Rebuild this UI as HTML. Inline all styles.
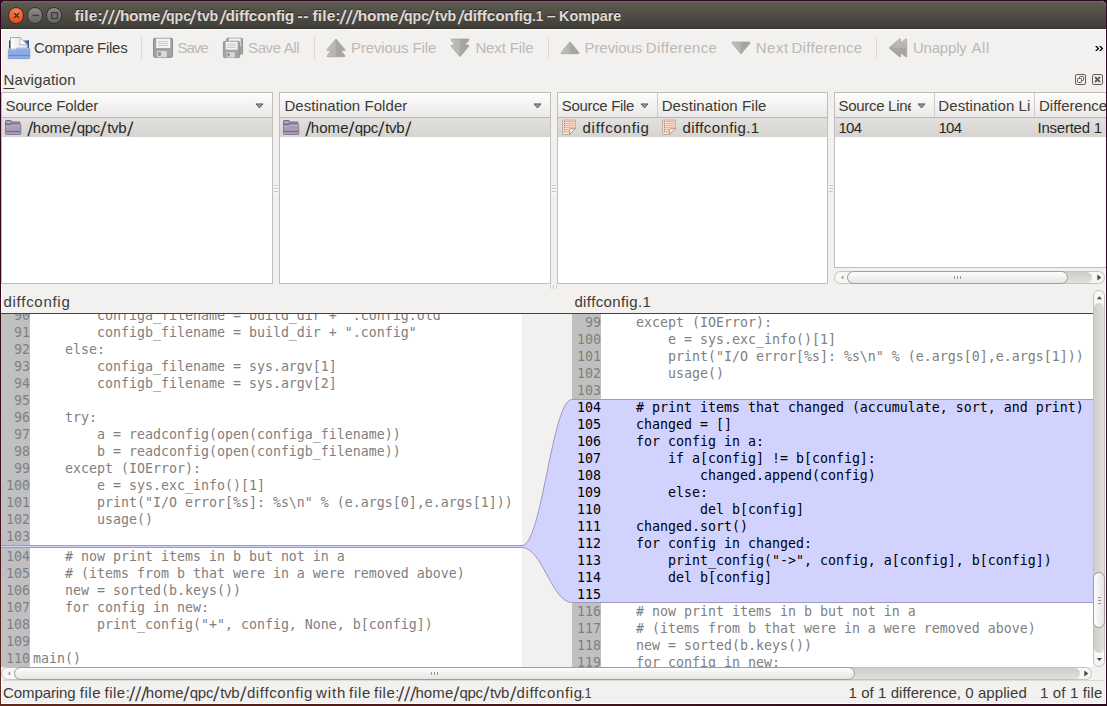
<!DOCTYPE html>
<html><head><meta charset="utf-8"><title>Kompare</title>
<style>
*{box-sizing:border-box;margin:0;padding:0}
html,body{width:1107px;height:706px;overflow:hidden;background:#2e0a20}
body{position:relative;font-family:"Liberation Sans","DejaVu Sans",sans-serif;font-size:15px;color:#3c3b37}
div,span,svg{position:absolute}
#win{left:1px;top:1px;width:1105px;height:703px;background:#f2f1f0;border:1px solid #fff;border-top:none;border-radius:5px 5px 0 0}
#title{left:1px;top:1px;width:1105px;height:28px;background:linear-gradient(#67665c 0,#67665c 1px,#5b5950 2px,#403e39 27px);border-bottom:1px solid #32312c;border-radius:5px 5px 0 0}
#title .t{left:73px;top:5.5px;font-weight:bold;font-size:15.5px;line-height:18px;color:#dfdbd2;white-space:nowrap;text-shadow:0 -1px 0 rgba(0,0,0,.55)}
.wb{top:6px;width:16.500px;height:16.500px;border-radius:50%}
.tx{white-space:nowrap;font-size:15px;line-height:18px;height:18px}
.dis{color:#bcb9b4}
u{text-decoration-thickness:1px;text-underline-offset:2.500px}
.sep{top:37px;width:1px;height:22px;background:#dad7d3}
/* nav panels */
.panel{background:#fff;border:1px solid #c1beb9}
.hdr{left:0;top:0;height:25px;background:linear-gradient(#fdfdfd,#ebe9e7);border-bottom:1px solid #bab7b1}
.row{color:#2a2926;left:0;top:25px;height:19px;background:linear-gradient(#e3e1df,#d6d4d1)}
.arr{width:0;height:0;border-left:4px solid transparent;border-right:4px solid transparent;border-top:5px solid #77746e}
/* code */
.code{font-family:"DejaVu Sans Mono","Liberation Mono",monospace;font-size:13.29px;line-height:17px;white-space:pre;color:#808080}
.pane{background:#fff;overflow:hidden}
.gut{background:#c0c0c0;left:0;top:0;width:29px}
.ln{left:0;width:29px;text-align:right;height:17px}
.cl{left:32px;height:17px}
.blk{color:#000}
</style></head><body>
<div style="left:0;top:0;width:1px;height:706px;background:linear-gradient(#2c001e,#3a0c1c 60%,#5e2a1e)"></div><div style="left:0;top:704px;width:1107px;height:2px;background:linear-gradient(90deg,#5e2a1e,#4a1818 40%,#35101e 70%,#2c0a1e)"></div>
<div id="win"></div>
<div id="title">
<div class="wb" style="left:6.900px;background:radial-gradient(circle at 50% 25%,#f4895f,#ea5822 65%,#dd4814);border:1px solid #4a2a1c"></div>
<div class="wb" style="left:25.900px;background:linear-gradient(#8d8c86,#64635d);border:1px solid #33322e"></div>
<div class="wb" style="left:44.900px;background:linear-gradient(#8d8c86,#64635d);border:1px solid #33322e"></div>
<svg style="left:-.4px;top:-.3px" width="70" height="28" viewBox="0 0 70 28"><path d="M13 12l5 5m0-5l-5 5" stroke="#3c2a20" stroke-width="1.300" fill="none"/><path d="M31.500 14.500h6.500" stroke="#3c3b37" stroke-width="1.400"/><rect x="50.500" y="11.500" width="6" height="6" fill="#6e6d67" stroke="#3c3b37" stroke-width="1.200"/></svg>
<span class="t" style="left:73.5px;top:5.5px;letter-spacing:0.16px">file:</span><span class="t" style="left:100.8px;top:5.5px;letter-spacing:-0.37px;transform:skewX(-2.8deg) scale(1.55,1.28);transform-origin:0 3.7px;font-weight:normal">///</span><span class="t" style="left:118.9px;top:5.5px;letter-spacing:-0.28px">home</span><span class="t" style="left:159.7px;top:5.5px;transform:skewX(-3.6deg) scale(1.55,1.28);transform-origin:0 3.7px;font-weight:normal">/</span><span class="t" style="left:164.6px;top:5.5px;transform:scaleX(0.907);transform-origin:0 0">qpc</span><span class="t" style="left:189.4px;top:5.5px;transform:skewX(-2.8deg) scale(1.55,1.28);transform-origin:0 3.7px;font-weight:normal">/</span><span class="t" style="left:196.1px;top:5.5px;transform:scaleX(0.916);transform-origin:0 0">tvb</span><span class="t" style="left:219.0px;top:5.5px;transform:skewX(-2.4deg) scale(1.55,1.28);transform-origin:0 3.7px;font-weight:normal">/</span><span class="t" style="left:224.6px;top:5.5px;letter-spacing:-0.21px">diffconfig </span><span class="t" style="left:296.5px;top:5.5px;letter-spacing:0.55px">-- </span><span class="t" style="left:311.4px;top:5.5px;letter-spacing:0.16px">file:</span><span class="t" style="left:338.7px;top:5.5px;letter-spacing:-0.37px;transform:skewX(-2.8deg) scale(1.55,1.28);transform-origin:0 3.7px;font-weight:normal">///</span><span class="t" style="left:356.8px;top:5.5px;letter-spacing:-0.28px">home</span><span class="t" style="left:397.6px;top:5.5px;transform:skewX(-3.6deg) scale(1.55,1.28);transform-origin:0 3.7px;font-weight:normal">/</span><span class="t" style="left:402.5px;top:5.5px;transform:scaleX(0.907);transform-origin:0 0">qpc</span><span class="t" style="left:427.3px;top:5.5px;transform:skewX(-2.8deg) scale(1.55,1.28);transform-origin:0 3.7px;font-weight:normal">/</span><span class="t" style="left:434.0px;top:5.5px;transform:scaleX(0.916);transform-origin:0 0">tvb</span><span class="t" style="left:456.9px;top:5.5px;transform:skewX(-2.4deg) scale(1.55,1.28);transform-origin:0 3.7px;font-weight:normal">/</span><span class="t" style="left:462.5px;top:5.5px;letter-spacing:-0.21px">diffconfig</span><span class="t" style="left:530.8px;top:5.5px;transform:scaleX(0.861);transform-origin:0 0">.1 </span><span class="t" style="left:546.1px;top:5.5px">– </span><span class="t" style="left:558.3px;top:5.5px;transform:scaleX(0.928);transform-origin:0 0">Kompare</span>
</div>
<div style="left:1px;top:29px;width:1105px;height:1px;background:#fdfdfc"></div>

<!-- TOOLBAR -->
<div id="tb" style="left:0;top:0;width:1107px;height:70px">
<span class="tx" style="left:34.0px;top:38.5px;letter-spacing:-0.31px">Compare </span><span class="tx" style="left:97.0px;top:38.5px;letter-spacing:-0.25px">Files</span>
<div class="sep" style="left:141px"></div>
<div class="tx dis" style="left:177.4px;top:38.5px;letter-spacing:-1px">Save</div>
<div class="tx dis" style="left:248px;top:38.5px;letter-spacing:-.37px">Save All</div>
<div class="sep" style="left:314px"></div>
<div class="tx dis" style="left:351px;top:38.5px;letter-spacing:-.117px">Previous File</div>
<div class="tx dis" style="left:475.4px;top:38.5px;letter-spacing:-.12px">Next File</div>
<div class="sep" style="left:548px"></div>
<span class="tx dis" style="left:584.5px;top:38.5px;letter-spacing:-0.07px">Previous </span><span class="tx dis" style="left:645.8px;top:38.5px;letter-spacing:0.34px">Difference</span>
<span class="tx dis" style="left:755.8px;top:38.5px;letter-spacing:0.47px">Next </span><span class="tx dis" style="left:791.5px;top:38.5px;letter-spacing:0.29px">Difference</span>
<div class="sep" style="left:876px"></div>
<span class="tx dis" style="left:912.9px;top:38.5px;letter-spacing:-0.18px">Unapply </span><span class="tx dis" style="left:971.5px;top:38.5px;letter-spacing:0.52px">All</span>
<svg style="left:1090px;top:42px" width="15" height="13" viewBox="1090 42 15 13"><path id="chv" d="M1095 46h1.800l2.500 2.550l-2.500 2.550h-1.800l2.500-2.550z" fill="#000"/><use href="#chv" x="4"/></svg>
</div>


<!-- ICONS -->
<svg id="icons" style="left:0;top:30px" width="1107" height="36" viewBox="0 30 1107 36">
<defs>
<linearGradient id="gA" x1="0" x2="1" y1="0" y2="0"><stop offset="0" stop-color="#c4c2bf"/><stop offset=".5" stop-color="#b4b2af"/><stop offset=".5" stop-color="#a9a7a4"/><stop offset="1" stop-color="#a3a19e"/></linearGradient>
<linearGradient id="gB" x1="0" x2="0" y1="0" y2="1"><stop offset="0" stop-color="#c4c2bf"/><stop offset=".5" stop-color="#b4b2af"/><stop offset=".5" stop-color="#a9a7a4"/><stop offset="1" stop-color="#a3a19e"/></linearGradient>
<linearGradient id="gP" x1="0" x2="1" y1="0" y2="0"><stop offset="0" stop-color="#fdfdfd"/><stop offset="1" stop-color="#dcdcdc"/></linearGradient>
<g id="flop"><rect x=".5" y=".5" width="19" height="19" rx="1" fill="#a3a3a3" stroke="#8e8e8e"/><path d="M.5 18.500v1h1z" fill="#f2f1f0"/><rect x="3.200" y=".8" width="14" height="9.400" fill="#f3f3f3"/><path d="M5 3.700h10M5 5.700h10M5 7.700h10" stroke="#c4c4c4" stroke-width=".9"/><rect x="4.200" y="13.200" width="9.600" height="6.300" fill="#d9d9d9"/><rect x="5.300" y="14.300" width="2.500" height="3.700" fill="#8c8c8c"/></g>
</defs>
<!-- compare files -->
<path d="M9 40.500h2v8h-2zM27 40.500h2v8h-2z" fill="#223f8e"/>
<path d="M22 40.500h6.500v8h-6.500z" fill="#3d64b8"/>
<path d="M10.500 37.500h9.500l7.500 7.500v5h-17z" fill="url(#gP)" stroke="#9a9a9a" stroke-width=".8"/>
<path d="M20 37.500q.8 4.500 -.5 7.200q3.500 -.8 8 .3z" fill="#fff" stroke="#a8a8a8" stroke-width=".7"/>
<path d="M8.300 49.200h7.500l1-1h12.400q.6 0 .6.600v9.200q0 .7-.7.700h-20.200q-.7 0-.7-.7z" fill="#8daae3" stroke="#6b8cd2" stroke-width=".6"/>
<path d="M8.500 55.500h21" stroke="#6787cf" stroke-width="1.100"/>
<path d="M8.600 49.700h7.200l1-1h12.300" stroke="#b5cbf2" stroke-width=".8" fill="none"/>
<!-- save -->
<use href="#flop" x="153" y="37.800"/>
<!-- save all -->
<g transform="translate(226.200 37.800) scale(.84)"><use href="#flop"/></g>
<g transform="translate(223 41) scale(.85)"><use href="#flop"/></g>
<!-- prev file -->
<path id="pf" d="M336 39l8.800 10.400q.6 1.200-.8 1.200h-3.200l4 4.900q.6 1.200-.8 1.200h-16q-1.400 0-.8-1.200l4-4.900h-3.200q-1.400 0-.8-1.200z" fill="url(#gA)" stroke="#a09e9b" stroke-width=".7"/>
<!-- next file -->
<g transform="translate(124 95.700) scale(1 -1)"><use href="#pf"/></g>
<!-- prev diff -->
<path id="pd" d="M570 41.800l8.800 10.600q.6 1.300-.8 1.300h-16q-1.400 0-.8-1.300z" fill="url(#gA)" stroke="#a09e9b" stroke-width=".7"/>
<g transform="translate(171 95.700) scale(1 -1)"><use href="#pd"/></g>
<!-- unapply all -->
<path d="M889 47.900l10.400-8.800q1.200-.6 1.200.8v3.200l4.900-4q1.200-.6 1.200.8v16q0 1.400-1.200.8l-4.900-4v3.200q0 1.400-1.200.8z" fill="url(#gB)" stroke="#a09e9b" stroke-width=".7"/>
</svg>

<!-- NAVIGATION -->
<div class="tx" style="left:3.5px;top:71px;letter-spacing:.122px"><u>N</u>avigation</div>

<div class="panel" style="left:1px;top:92px;width:272px;height:192px">
 <div class="hdr" style="width:270px"><div class="tx" style="left:3.500px;top:3.5px;letter-spacing:-.125px">Source Folder</div><svg style="left:253px;top:9.500px" width="9" height="7" viewBox="0 0 9 7"><path d="M1 .900h7l-3.500 4.100z" fill="#9c9a96" stroke="#55534e" stroke-width=".9" stroke-linejoin="round"/></svg></div>
 <div class="row" style="width:270px"><span class="tx" style="left:25.7px;top:0.8px;transform:skewX(-3.5deg) scale(1.25,1.33);transform-origin:0 5.15px">/</span><span class="tx" style="left:30.7px;top:0.8px;letter-spacing:0.12px">home</span><span class="tx" style="left:69.2px;top:0.8px;transform:skewX(-3.5deg) scale(1.25,1.33);transform-origin:0 5.15px">/</span><span class="tx" style="left:74.7px;top:0.8px;letter-spacing:-0.30px">qpc</span><span class="tx" style="left:99.1px;top:0.8px;transform:skewX(-4.7deg) scale(1.25,1.33);transform-origin:0 5.15px">/</span><span class="tx" style="left:105.2px;top:0.8px;letter-spacing:-0.28px">tvb</span><span class="tx" style="left:126.2px;top:0.8px;transform:skewX(-4.7deg) scale(1.25,1.33);transform-origin:0 5.15px">/</span></div>
</div>
<div class="panel" style="left:279px;top:92px;width:272px;height:192px">
 <div class="hdr" style="width:270px"><div class="tx" style="left:4.4px;top:3.5px;letter-spacing:.07px">Destination Folder</div><svg style="left:253px;top:9.500px" width="9" height="7" viewBox="0 0 9 7"><path d="M1 .900h7l-3.500 4.100z" fill="#9c9a96" stroke="#55534e" stroke-width=".9" stroke-linejoin="round"/></svg></div>
 <div class="row" style="width:270px"><span class="tx" style="left:25.7px;top:0.8px;transform:skewX(-3.5deg) scale(1.25,1.33);transform-origin:0 5.15px">/</span><span class="tx" style="left:30.7px;top:0.8px;letter-spacing:0.12px">home</span><span class="tx" style="left:69.2px;top:0.8px;transform:skewX(-3.5deg) scale(1.25,1.33);transform-origin:0 5.15px">/</span><span class="tx" style="left:74.7px;top:0.8px;letter-spacing:-0.30px">qpc</span><span class="tx" style="left:99.1px;top:0.8px;transform:skewX(-4.7deg) scale(1.25,1.33);transform-origin:0 5.15px">/</span><span class="tx" style="left:105.2px;top:0.8px;letter-spacing:-0.28px">tvb</span><span class="tx" style="left:126.2px;top:0.8px;transform:skewX(-4.7deg) scale(1.25,1.33);transform-origin:0 5.15px">/</span></div>
</div>
<div class="panel" style="left:557px;top:92px;width:271px;height:192px">
 <div class="hdr" style="width:269px"><div class="tx" style="left:3.8px;top:3.5px;letter-spacing:-.33px">Source File</div><svg style="left:82px;top:9.500px" width="9" height="7" viewBox="0 0 9 7"><path d="M1 .900h7l-3.500 4.100z" fill="#9c9a96" stroke="#55534e" stroke-width=".9" stroke-linejoin="round"/></svg>
 <div style="left:99px;top:0;width:1px;height:24px;background:#cfccc8"></div><div class="tx" style="left:103.7px;top:3.5px;letter-spacing:.093px">Destination File</div></div>
 <div class="row" style="width:269px"><div class="tx" style="left:24.5px;top:.8px;letter-spacing:.744px">diffconfig</div><div class="tx" style="left:124.6px;top:.8px;letter-spacing:.382px">diffconfig.1</div></div>
</div>
<div class="panel" style="left:834px;top:92px;width:272px;height:176px;border-right:none;overflow:hidden">
 <div class="hdr" style="width:271px"><div class="tx" style="left:3.5px;top:3.5px;width:72.5px;overflow:hidden;letter-spacing:-.3px">Source Line</div><svg style="left:82px;top:9.500px" width="9" height="7" viewBox="0 0 9 7"><path d="M1 .900h7l-3.500 4.100z" fill="#9c9a96" stroke="#55534e" stroke-width=".9" stroke-linejoin="round"/></svg>
 <div style="left:99px;top:0;width:1px;height:24px;background:#cfccc8"></div><div class="tx" style="left:103.3px;top:3.5px;width:92px;overflow:hidden;letter-spacing:.092px">Destination Line</div>
 <div style="left:199px;top:0;width:1px;height:24px;background:#cfccc8"></div><div class="tx" style="left:204px;top:3.5px">Difference</div></div>
 <div class="row" style="width:271px"><div class="tx" style="left:3.4px;top:.8px;letter-spacing:-.7px">104</div><div class="tx" style="left:103.4px;top:.8px;letter-spacing:-.7px">104</div><div class="tx" style="left:202.6px;top:.8px;letter-spacing:-.256px">Inserted 1 line</div></div>
</div>


<!-- ROW ICONS -->
<svg style="left:0;top:117px" width="700" height="20" viewBox="0 117 700 20">
<defs>
<g id="fold"><path d="M.5 1.300q0-.8.800-.8h4.400q.8 0 .8.800v.7h7.700q.8 0 .8.800v2.200h-14.500z" fill="#9d93ac" stroke="#6a6788" stroke-width=".9"/><path d="M1.500 2.500h4" stroke="#c9c0d6" stroke-width=".9"/><path d="M1.300 3.900h13" stroke="#6f6c8c" stroke-width="1"/><path d="M.5 5.500h5.500l1-1h8q.8 0 .8.800v8.400q0 .8-.8.800h-13.700q-.8 0-.8-.8z" fill="#a89db3" stroke="#77718f" stroke-width=".8"/><path d="M.8 11.500h14.700" stroke="#6d6a8b" stroke-width="1.100"/><path d="M1 6h5l1-1h8" stroke="#d5cbdc" stroke-width=".7" fill="none"/></g>
<g id="doc"><path d="M.5.500h13v8.500l-6 6h-7z" fill="#fcdac6" stroke="#b3a4a8" stroke-width=".8"/><path d="M13.500 9h-4.500q-1.500 0-1.500 1.500v4.500z" fill="#fde6da" stroke="#a98080" stroke-width=".7"/><path d="M4 2h8.500M4 4h8.500M4 6h8.500M4 8h8.500M4 10h3.500M4 12h3" stroke="#dcb8a8" stroke-width="1"/><path d="M2 2h1.200M2 4h1.200M2 6h1.200M2 8h1.200M2 10h1.200M2 12h1.200" stroke="#927488" stroke-width="1"/></g>
</defs>
<use href="#fold" x="5" y="120"/>
<use href="#fold" x="283" y="120"/>
<use href="#doc" x="562" y="119.500"/>
<use href="#doc" x="662" y="119.500"/>
</svg>


<!-- SPLITTER HANDLES -->
<style>.hh{width:4px;height:1px;background:#cbc8c4;box-shadow:0 1px 0 #fbfbfa}.hv{width:1px;height:4px;background:#cbc8c4;box-shadow:1px 0 0 #fbfbfa}</style>
<div class="hh" style="left:274px;top:185px"></div><div class="hh" style="left:274px;top:188px"></div><div class="hh" style="left:274px;top:191px"></div>
<div class="hh" style="left:552px;top:185px"></div><div class="hh" style="left:552px;top:188px"></div><div class="hh" style="left:552px;top:191px"></div>
<div class="hh" style="left:829px;top:185px"></div><div class="hh" style="left:829px;top:188px"></div><div class="hh" style="left:829px;top:191px"></div>
<div class="hv" style="left:550px;top:285px"></div><div class="hv" style="left:553px;top:285px"></div><div class="hv" style="left:556px;top:285px"></div>

<!-- DIFF VIEW -->
<div class="tx" style="left:3.5px;top:293px;letter-spacing:.722px">diffconfig</div>
<div class="tx" style="left:574.4px;top:293px;letter-spacing:.391px">diffconfig.1</div>
<div style="left:1px;top:313px;width:1092px;height:1px;background:#45443f"></div>

<div id="lp" class="pane code" style="left:1px;top:314px;width:521px;height:353px">
<div class="gut" style="height:353px"></div>
<div class="ln" style="top:-7px">90</div><div class="cl" style="top:-7px">        configa_filename = build_dir + ".config.old"</div>
<div class="ln" style="top:10px">91</div><div class="cl" style="top:10px">        configb_filename = build_dir + ".config"</div>
<div class="ln" style="top:27px">92</div><div class="cl" style="top:27px">    else:</div>
<div class="ln" style="top:44px">93</div><div class="cl" style="top:44px">        configa_filename = sys.argv[1]</div>
<div class="ln" style="top:61px">94</div><div class="cl" style="top:61px">        configb_filename = sys.argv[2]</div>
<div class="ln" style="top:78px">95</div>
<div class="ln" style="top:95px">96</div><div class="cl" style="top:95px">    try:</div>
<div class="ln" style="top:112px">97</div><div class="cl" style="top:112px">        a = readconfig(open(configa_filename))</div>
<div class="ln" style="top:129px">98</div><div class="cl" style="top:129px">        b = readconfig(open(configb_filename))</div>
<div class="ln" style="top:146px">99</div><div class="cl" style="top:146px">    except (IOError):</div>
<div class="ln" style="top:163px">100</div><div class="cl" style="top:163px">        e = sys.exc_info()[1]</div>
<div class="ln" style="top:180px">101</div><div class="cl" style="top:180px">        print("I/O error[%s]: %s\n" % (e.args[0],e.args[1]))</div>
<div class="ln" style="top:197px">102</div><div class="cl" style="top:197px">        usage()</div>
<div class="ln" style="top:214px">103</div>
<div style="left:0;top:231px;width:521px;height:3px;background:#d2d2ff;border-top:1px solid #9b9bbd;border-bottom:1px solid #9b9bbd"></div>
<div class="ln" style="top:234px">104</div><div class="cl" style="top:234px">    # now print items in b but not in a</div>
<div class="ln" style="top:251px">105</div><div class="cl" style="top:251px">    # (items from b that were in a were removed above)</div>
<div class="ln" style="top:268px">106</div><div class="cl" style="top:268px">    new = sorted(b.keys())</div>
<div class="ln" style="top:285px">107</div><div class="cl" style="top:285px">    for config in new:</div>
<div class="ln" style="top:302px">108</div><div class="cl" style="top:302px">        print_config("+", config, None, b[config])</div>
<div class="ln" style="top:319px">109</div>
<div class="ln" style="top:336px">110</div><div class="cl" style="top:336px">main()</div>
</div>
<div id="rp" class="pane code" style="left:572px;top:314px;width:521px;height:353px">
<div class="gut" style="height:353px"></div>
<div style="left:0;top:85px;width:521px;height:204px;background:#d2d2ff;border-top:1px solid #9b9bbd;border-bottom:1px solid #9b9bbd"></div>
<div class="ln" style="top:0px">99</div><div class="cl" style="top:0px">    except (IOError):</div>
<div class="ln" style="top:17px">100</div><div class="cl" style="top:17px">        e = sys.exc_info()[1]</div>
<div class="ln" style="top:34px">101</div><div class="cl" style="top:34px">        print("I/O error[%s]: %s\n" % (e.args[0],e.args[1]))</div>
<div class="ln" style="top:51px">102</div><div class="cl" style="top:51px">        usage()</div>
<div class="ln" style="top:68px">103</div>
<div class="ln blk" style="top:85px">104</div><div class="cl blk" style="top:85px">    # print items that changed (accumulate, sort, and print)</div>
<div class="ln blk" style="top:102px">105</div><div class="cl blk" style="top:102px">    changed = []</div>
<div class="ln blk" style="top:119px">106</div><div class="cl blk" style="top:119px">    for config in a:</div>
<div class="ln blk" style="top:136px">107</div><div class="cl blk" style="top:136px">        if a[config] != b[config]:</div>
<div class="ln blk" style="top:153px">108</div><div class="cl blk" style="top:153px">            changed.append(config)</div>
<div class="ln blk" style="top:170px">109</div><div class="cl blk" style="top:170px">        else:</div>
<div class="ln blk" style="top:187px">110</div><div class="cl blk" style="top:187px">            del b[config]</div>
<div class="ln blk" style="top:204px">111</div><div class="cl blk" style="top:204px">    changed.sort()</div>
<div class="ln blk" style="top:221px">112</div><div class="cl blk" style="top:221px">    for config in changed:</div>
<div class="ln blk" style="top:238px">113</div><div class="cl blk" style="top:238px">        print_config("-&gt;", config, a[config], b[config])</div>
<div class="ln blk" style="top:255px">114</div><div class="cl blk" style="top:255px">        del b[config]</div>
<div class="ln blk" style="top:272px">115</div>
<div class="ln" style="top:289px">116</div><div class="cl" style="top:289px">    # now print items in b but not in a</div>
<div class="ln" style="top:306px">117</div><div class="cl" style="top:306px">    # (items from b that were in a were removed above)</div>
<div class="ln" style="top:323px">118</div><div class="cl" style="top:323px">    new = sorted(b.keys())</div>
<div class="ln" style="top:340px">119</div><div class="cl" style="top:340px">    for config in new:</div>
</div>


<!-- DOCK BUTTONS -->
<svg style="left:1070px;top:70px" width="36" height="20" viewBox="1070 70 36 20"><g fill="none" stroke="#625f59" stroke-width="1"><rect x="1075.500" y="74.500" width="10" height="10" rx="1.5"/><rect x="1092.500" y="74.500" width="10" height="10" rx="1.5"/><rect x="1079.500" y="76.500" width="4" height="4" rx=".8"/><rect x="1077.500" y="78.500" width="4" height="4" rx=".8" fill="#f2f1f0"/><path d="M1095 77l5 5m0-5l-5 5" stroke-width="1.800"/></g></svg>

<!-- SCROLLBARS -->
<style>
.sbo{border:1px solid #c5c2bd;background:#f8f7f6;border-radius:7px}
.trh{background:linear-gradient(#cfcdc9,#e2e0dd);border-radius:6px}
.trv{background:linear-gradient(90deg,#cfcdc9,#e2e0dd);border-radius:6px}
.thh{border:1px solid #a19e98;background:linear-gradient(#fdfdfd,#e6e5e3);border-radius:7px}
.thv{border:1px solid #a19e98;background:linear-gradient(90deg,#fdfdfd,#e6e5e3);border-radius:7px}
.gv{width:1px;height:3px;background:#9a9792}
.gh{width:3px;height:1px;background:#9a9792}
.al{width:0;height:0;border-top:2.500px solid transparent;border-bottom:2.500px solid transparent;border-right:3px solid #a8a5a0}
.ar{width:0;height:0;border-top:3px solid transparent;border-bottom:3px solid transparent;border-left:4px solid #4a4945}
.au{width:0;height:0;border-left:2.500px solid transparent;border-right:2.500px solid transparent;border-bottom:2.500px solid #4a4945}
.ad{width:0;height:0;border-left:2.500px solid transparent;border-right:2.500px solid transparent;border-top:2.500px solid #4a4945}
</style>
<!-- nav h-scroll -->
<div class="sbo" style="left:834px;top:271px;width:271px;height:13px"></div>
<div class="trh" style="left:847px;top:272px;width:245px;height:11px"></div>
<div class="thh" style="left:847px;top:271px;width:221px;height:13px"></div>
<div class="gv" style="left:954px;top:276px"></div><div class="gv" style="left:957px;top:276px"></div><div class="gv" style="left:960px;top:276px"></div>
<!-- main h-scroll -->
<div class="sbo" style="left:1px;top:667px;width:1091px;height:13px"></div>
<div class="trh" style="left:14px;top:668px;width:1066px;height:11px"></div>
<div class="thh" style="left:14px;top:667px;width:841px;height:13px"></div>
<div class="gv" style="left:431px;top:672px"></div><div class="gv" style="left:434px;top:672px"></div><div class="gv" style="left:437px;top:672px"></div>
<!-- main v-scroll -->
<div class="sbo" style="left:1093px;top:290px;width:12px;height:377px"></div>
<div class="trv" style="left:1094px;top:303px;width:10px;height:350px"></div>
<div class="thv" style="left:1093px;top:572px;width:12px;height:56px"></div>
<div class="gh" style="left:1097.500px;top:596.500px"></div><div class="gh" style="left:1097.500px;top:599.500px"></div><div class="gh" style="left:1097.500px;top:602.500px"></div>


<!-- CONNECTOR -->
<svg style="left:522px;top:314px" width="50" height="353" viewBox="522 314 50 353">
<path d="M522 545.500C542 545.500 552 399.500 572 399.500L572 602.500C552 602.500 542 547.500 522 547.500Z" fill="#d2d2ff"/>
<path d="M522 545.500C542 545.500 552 399.500 572 399.500M522 547.500C542 547.500 552 602.500 572 602.500" fill="none" stroke="#9b9bbd" stroke-width="1"/>
</svg>

<svg style="left:0;top:270px" width="1107" height="412" viewBox="0 270 1107 412">
<path d="M1096.800 299.300l2.600-3l2.600 3zM1096.800 658.100l2.600 3l2.600-3z" fill="#4c4a46"/>
<path d="M1097.300 274.500l4 3l-4 3zM1084.300 670.500l4 3l-4 3z" fill="#4c4a46"/>
<path d="M843.500 275.300l-2.800 2.200l2.800 2.200zM10.300 671.300l-2.800 2.200l2.800 2.200z" fill="#a9a6a1"/>
</svg>

<!-- STATUS -->
<div style="left:2px;top:680px;width:1103px;height:1px;background:#dcdad6"></div>
<div id="stxt" style="left:0;top:0"><span class="tx" style="left:3.0px;top:683.5px;letter-spacing:-0.09px">Comparing </span><span class="tx" style="left:79.8px;top:683.5px;letter-spacing:0.52px">file </span><span class="tx" style="left:104.5px;top:683.5px;letter-spacing:0.51px">file:</span><span class="tx" style="left:129.8px;top:683.5px;letter-spacing:0.63px;transform:skewX(-4.3deg) scale(1.25,1.33);transform-origin:0 5.15px">///</span><span class="tx" style="left:145.8px;top:683.5px;letter-spacing:0.12px">home</span><span class="tx" style="left:184.3px;top:683.5px;transform:skewX(-3.5deg) scale(1.25,1.33);transform-origin:0 5.15px">/</span><span class="tx" style="left:189.8px;top:683.5px;letter-spacing:-0.30px">qpc</span><span class="tx" style="left:214.2px;top:683.5px;transform:skewX(-4.7deg) scale(1.25,1.33);transform-origin:0 5.15px">/</span><span class="tx" style="left:220.2px;top:683.5px;letter-spacing:-0.28px">tvb</span><span class="tx" style="left:241.3px;top:683.5px;transform:skewX(-4.7deg) scale(1.25,1.33);transform-origin:0 5.15px">/</span><span class="tx" style="left:246.9px;top:683.5px;letter-spacing:0.64px">diffconfig </span><span class="tx" style="left:316.1px;top:683.5px;letter-spacing:0.82px">with </span><span class="tx" style="left:349.1px;top:683.5px;letter-spacing:0.65px">file </span><span class="tx" style="left:374.1px;top:683.5px;letter-spacing:0.51px">file:</span><span class="tx" style="left:399.4px;top:683.5px;letter-spacing:0.63px;transform:skewX(-4.3deg) scale(1.25,1.33);transform-origin:0 5.15px">///</span><span class="tx" style="left:415.4px;top:683.5px;letter-spacing:0.12px">home</span><span class="tx" style="left:453.9px;top:683.5px;transform:skewX(-3.5deg) scale(1.25,1.33);transform-origin:0 5.15px">/</span><span class="tx" style="left:459.4px;top:683.5px;letter-spacing:-0.30px">qpc</span><span class="tx" style="left:483.8px;top:683.5px;transform:skewX(-4.7deg) scale(1.25,1.33);transform-origin:0 5.15px">/</span><span class="tx" style="left:489.9px;top:683.5px;letter-spacing:-0.28px">tvb</span><span class="tx" style="left:510.9px;top:683.5px;transform:skewX(-4.7deg) scale(1.25,1.33);transform-origin:0 5.15px">/</span><span class="tx" style="left:516.5px;top:683.5px;letter-spacing:0.64px">diffconfig</span><span class="tx" style="left:581.3px;top:683.5px;transform:scaleX(0.857);transform-origin:0 0">.1</span></div>
<div class="tx" style="left:848.5px;top:683.5px;letter-spacing:.063px">1 of 1 difference, 0 applied</div>
<div class="tx" style="left:1040px;top:683.5px;letter-spacing:.14px">1 of 1 file</div>
</body></html>
